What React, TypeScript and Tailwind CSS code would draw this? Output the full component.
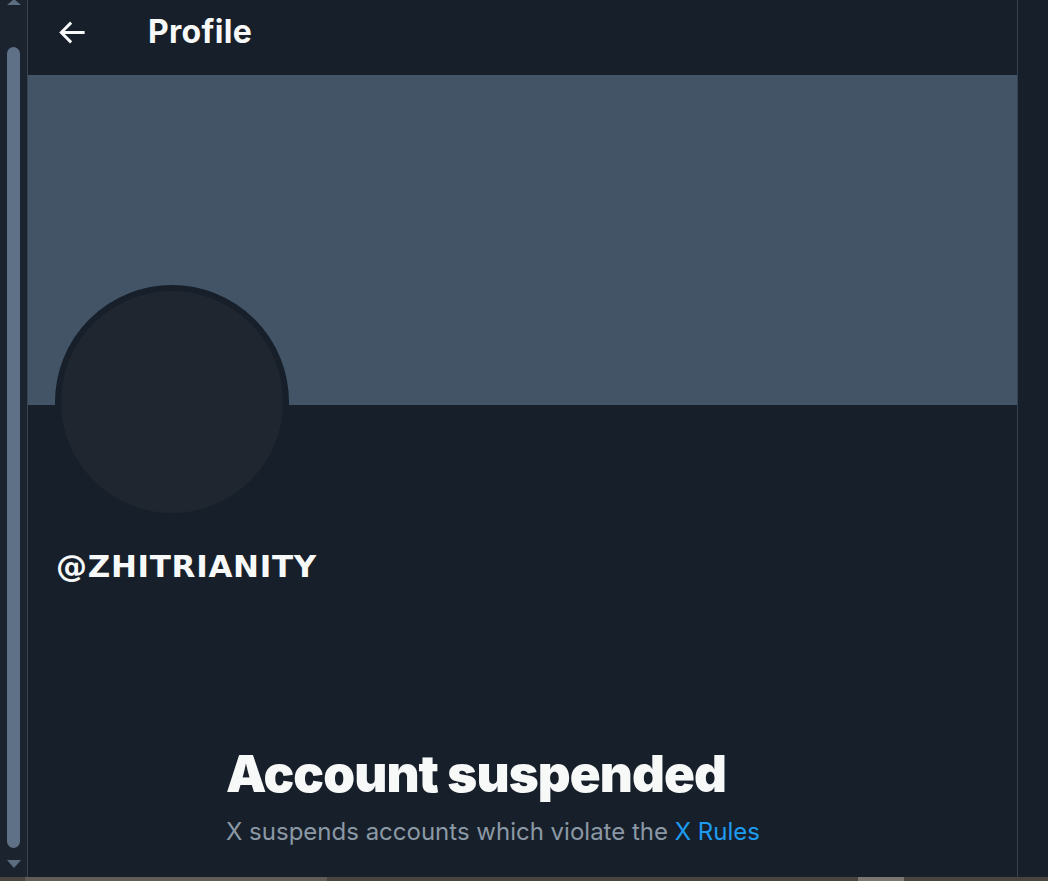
function Scrollbar() {
  return (
    <div className="w-[28px] shrink-0 bg-[#1b242e] border-r border-[#36424d] flex flex-col items-center">
      <div className="w-0 h-0 border-l-[7px] border-r-[7px] border-b-[6px] border-l-transparent border-r-transparent border-b-[#5c6d80] mt-[-1px]" />
      <div className="w-[13px] flex-1 mt-[42px] mb-[12px] rounded-full bg-[#5f7187]" />
      <div className="w-0 h-0 border-l-[7px] border-r-[7px] border-t-[8px] border-l-transparent border-r-transparent border-t-[#5c6d80] mb-[9px]" />
    </div>
  );
}

function BackArrow() {
  return (
    <svg viewBox="0 0 24 24" className="w-[35px] h-[35px] fill-[#f7f9f9]">
      <path d="M7.414 13l5.043 5.04-1.414 1.42L3.586 12l7.457-7.46 1.414 1.42L7.414 11H21v2H7.414z" />
    </svg>
  );
}

export default function App() {
  return (
    <div className="w-[1048px] h-[881px] flex flex-col bg-[#17202a] overflow-hidden" style={{ fontFamily: 'Inter, "Noto Sans", sans-serif' }}>
      <div className="flex flex-1 min-h-0">
        <Scrollbar />

        <main className="w-[989px] shrink-0 flex flex-col">
          {/* header */}
          <div className="h-[75px] flex items-center pb-[11px] pl-[26px]">
            <BackArrow />
            <h1 className="ml-[59px] text-[32px] font-bold text-[#f7f9f9] tracking-[0.3px]">Profile</h1>
          </div>

          {/* banner */}
          <div className="h-[330px] bg-[#425466]" />

          {/* avatar */}
          <div className="ml-[27px] -mt-[120px] w-[234px] h-[234px] rounded-full bg-[#1f2630] border-[6px] border-[#17202a]" />

          <div
            className="ml-[28px] mt-[29px] text-[31px] font-bold text-[#f7f9f9] leading-[36px] tracking-[0.7px]"
            style={{ fontFamily: '"DejaVu Sans", Verdana, sans-serif' }}
          >
            @ZHITRIANITY
          </div>

          {/* empty state */}
          <div className="pl-[198px] mt-[160px] flex flex-col">
            <h2 className="text-[51px] font-black text-[#f7f9f9] leading-[60px] tracking-[-0.9px]">Account suspended</h2>
            <p className="mt-[13px] text-[24px] text-[#8b98a5] leading-[30px]">
              X suspends accounts which violate the <span className="text-[#1d9bf0]">X Rules</span>
            </p>
          </div>
        </main>

        <div className="flex-1 border-l border-[#36424d] bg-[#17202a]" />
      </div>

      {/* horizontal scrollbar */}
      <div className="h-[4px] shrink-0 bg-[#4a443f] flex">
        <div className="w-[302px] ml-[25px] bg-[#625c56]" />
        <div className="w-[46px] ml-[531px] bg-[#7c7670]" />
      </div>
    </div>
  );
}
